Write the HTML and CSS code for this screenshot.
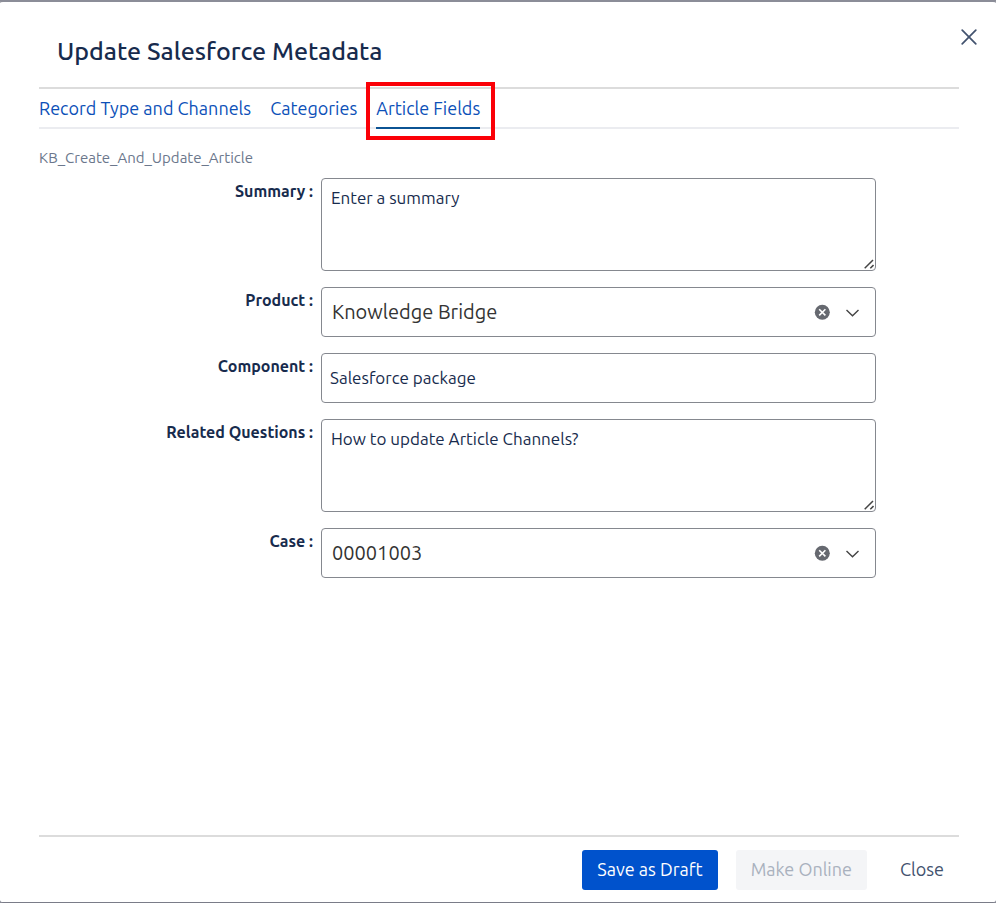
FILE: index.html
```html
<!DOCTYPE html>
<html lang="en">
<head>
    <meta charset="UTF-8">
    <meta name="viewport" content="width=device-width, initial-scale=1">
    <title>Update Salesforce Metadata</title>
    <link rel="stylesheet" href="styles.css">
</head>
<body>
    <div class="dialog" role="dialog" aria-labelledby="dialog-title">
        <header class="dialog-header">
            <h1 id="dialog-title">Update Salesforce Metadata</h1>
            <button type="button" class="icon-button dialog-close" aria-label="Close dialog">
                <svg width="16" height="16" viewBox="0 0 16 16" fill="none" stroke="currentColor" stroke-width="1.7" stroke-linecap="round">
                    <path d="M1.2 1.2 14.8 14.8M14.8 1.2 1.2 14.8"/>
                </svg>
            </button>
        </header>

        <nav class="tabs">
            <a class="tab" href="#record-type">Record Type and Channels</a>
            <a class="tab" href="#categories">Categories</a>
            <a class="tab active" href="#article-fields" aria-current="page">Article Fields</a>
        </nav>

        <p class="layout-name">KB_Create_And_Update_Article</p>

        <form class="fields" id="article-fields">
            <label for="summary">Summary :</label>
            <div class="control">
                <textarea id="summary">Enter a summary</textarea>
                <svg class="grip" width="10" height="10" viewBox="0 0 10 10" fill="none" stroke="currentColor" stroke-width="1.5">
                    <path d="M.7 9.3 9 1M6.3 9.3 9.5 6.1"/>
                </svg>
            </div>

            <label for="product">Product :</label>
            <div class="control">
                <select id="product">
                    <option>Knowledge Bridge</option>
                </select>
                <button type="button" class="icon-button clear" aria-label="Clear product">
                    <svg width="16" height="16" viewBox="0 0 16 16">
                        <circle cx="8.3" cy="8.3" r="7.5" fill="currentColor"/>
                        <path d="M5.2 5.2 11.4 11.4M11.4 5.2 5.2 11.4" fill="none" stroke="#fff" stroke-width="1.6"/>
                    </svg>
                </button>
                <svg class="chevron" width="14" height="8" viewBox="0 0 14 8" fill="none" stroke="currentColor" stroke-width="1.4">
                    <path d="M1.5 1 7.5 6.8 13.5 1"/>
                </svg>
            </div>

            <label for="component">Component :</label>
            <div class="control">
                <input type="text" id="component" value="Salesforce package">
            </div>

            <label for="questions">Related Questions :</label>
            <div class="control">
                <textarea id="questions">How to update Article Channels?</textarea>
                <svg class="grip" width="10" height="10" viewBox="0 0 10 10" fill="none" stroke="currentColor" stroke-width="1.5">
                    <path d="M.7 9.3 9 1M6.3 9.3 9.5 6.1"/>
                </svg>
            </div>

            <label for="case">Case :</label>
            <div class="control">
                <select id="case">
                    <option>00001003</option>
                </select>
                <button type="button" class="icon-button clear" aria-label="Clear case">
                    <svg width="16" height="16" viewBox="0 0 16 16">
                        <circle cx="8.3" cy="8.3" r="7.5" fill="currentColor"/>
                        <path d="M5.2 5.2 11.4 11.4M11.4 5.2 5.2 11.4" fill="none" stroke="#fff" stroke-width="1.6"/>
                    </svg>
                </button>
                <svg class="chevron" width="14" height="8" viewBox="0 0 14 8" fill="none" stroke="currentColor" stroke-width="1.4">
                    <path d="M1.5 1 7.5 6.8 13.5 1"/>
                </svg>
            </div>
        </form>

        <footer class="dialog-footer">
            <button type="button" class="btn btn-primary">Save as Draft</button>
            <button type="button" class="btn" disabled>Make Online</button>
            <button type="button" class="btn btn-link">Close</button>
        </footer>
    </div>
</body>
</html>
```
FILE: styles.css
```css
* {
    box-sizing: border-box;
}

body {
    margin: 0;
    background: #8b8d98;
    font-family: Ubuntu, 'Noto Sans', sans-serif;
    font-size: 17px;
    line-height: 24px;
    color: #172b4d;
}

.dialog {
    display: flex;
    flex-direction: column;
    min-height: 100vh;
    padding: 0 37px 0 39px;
    background: #fff;
    border-top: 2px solid #8b8d98;
    border-bottom: 1px solid #7a7c88;
    border-radius: 3px;
}

/* header */
.dialog-header {
    position: relative;
    padding: 33px 18px 20px;
    border-bottom: 2px solid #dcdcdc;
}

.dialog-header h1 {
    margin: 0;
    font-size: 25px;
    font-weight: 500;
    line-height: 32px;
}

.icon-button {
    display: flex;
    padding: 0;
    border: 0;
    background: none;
    cursor: pointer;
}

.dialog-close {
    position: absolute;
    top: 27px;
    right: -18px;
    color: #42526e;
}

/* tabs */
.tabs {
    display: flex;
    gap: 19px;
    border-bottom: 2px solid #ebecf0;
}

.tab {
    position: relative;
    padding: 7px 0;
    margin-bottom: -2px;
    border-bottom: 2px solid transparent;
    color: #0c50b8;
    font-size: 18px;
    font-weight: 400;
    text-decoration: none;
}

.tab.active {
    border-bottom-color: #0b5394;
}

.tab.active::after {
    content: '';
    position: absolute;
    inset: -7px -15px -13px -10px;
    border: 4px solid #fb0007;
}

.layout-name {
    margin: 17px 0 8px;
    font-size: 15px;
    color: #6b778c;
}

/* form */
.fields {
    display: grid;
    grid-template-columns: 274px minmax(0, 1fr);
    gap: 16px 8px;
    padding-right: 83px;
}

.fields label {
    padding-top: 1px;
    font-size: 16px;
    font-weight: 700;
    text-align: right;
}

.control {
    position: relative;
    display: flex;
}

.control textarea,
.control input,
.control select {
    width: 100%;
    height: 50px;
    margin: 0;
    padding: 0 8px 2px;
    border: 1px solid #85888f;
    border-radius: 4px;
    background: #fff;
    font-family: inherit;
    font-size: 17px;
    line-height: 24px;
    color: inherit;
}

.control textarea {
    height: 93px;
    padding: 7px 9px;
    resize: none;
}

.control select {
    padding: 0 70px 0 10px;
    appearance: none;
    font-size: 20px;
    color: #333;
}

.grip {
    position: absolute;
    right: 2px;
    bottom: 2px;
    color: #444;
    pointer-events: none;
}

.clear {
    position: absolute;
    top: 17px;
    right: 46px;
    color: #666970;
}

.chevron {
    position: absolute;
    top: 22px;
    right: 17px;
    color: #444;
    pointer-events: none;
}

/* footer */
.dialog-footer {
    display: flex;
    justify-content: flex-end;
    gap: 18px;
    margin-top: auto;
    padding: 13px 0 12px;
    border-top: 2px solid #dcdcdc;
}

.btn {
    height: 40px;
    padding: 0 15px 2px;
    border: 0;
    border-radius: 3px;
    background: #f4f5f7;
    font-family: inherit;
    font-size: 18px;
    font-weight: 400;
    color: #42526e;
}

.btn:disabled {
    color: #a9b1be;
}

.btn-primary {
    background: #0052cc;
    color: #fff;
}

.btn-link {
    background: none;
}
```
